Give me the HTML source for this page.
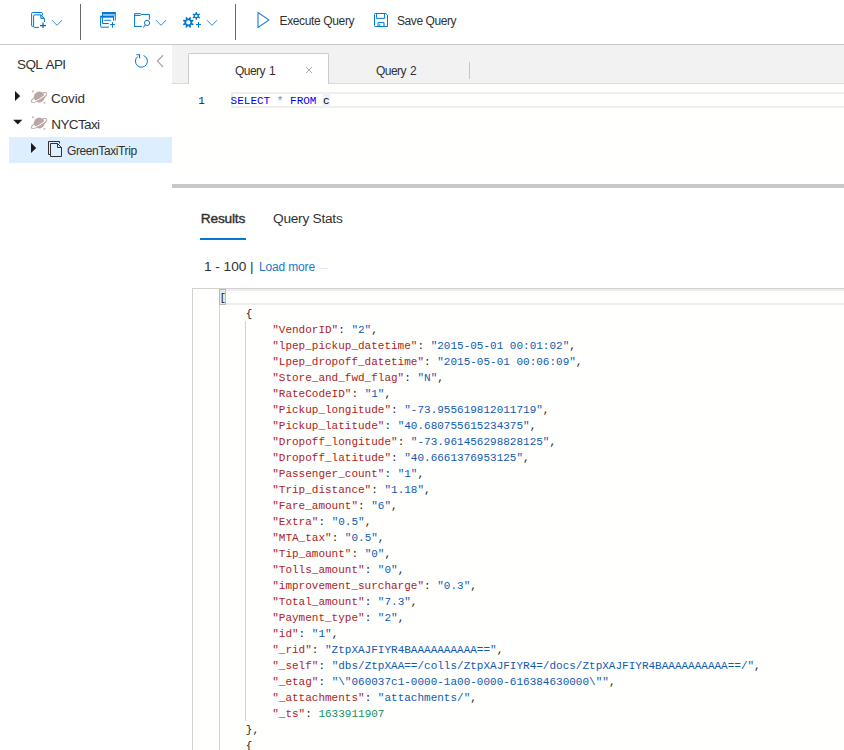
<!DOCTYPE html>
<html lang="en">
<head>
<meta charset="utf-8">
<title>Data Explorer</title>
<style>
html,body{margin:0;padding:0;}
body{width:844px;height:750px;overflow:hidden;background:#fff;position:relative;font-family:"Liberation Sans",sans-serif;color:#1b1a19;}
.abs{position:absolute;}
svg{position:absolute;overflow:visible;}
.t{position:absolute;white-space:nowrap;line-height:1;}
/* toolbar */
#tbline{left:0;top:44px;width:844px;height:1px;background:#c8c8c8;}
.vsep{width:1px;background:#686868;top:4px;height:36px;}
.cmd{font-size:12px;color:#323130;}
/* sidebar */
#sel{left:9px;top:137px;width:163px;height:26px;background:#ddeefe;}
.tree{font-size:14px;color:#323130;}
/* tabs */
#tabbar{left:172px;top:45px;width:672px;height:38px;background:#f2f2f2;border-bottom:1px solid #dadada;}
#tab1{left:188px;top:53px;width:139px;height:30px;background:#fff;border:1px solid #cbcbcb;border-bottom:none;border-radius:2px 2px 0 0;}
.tabt{font-size:12px;letter-spacing:-0.55px;word-spacing:1.2px;color:#323130;}
/* editors */
.mono{font-family:"Liberation Mono",monospace;font-size:11px;}
#qline{left:231px;top:92px;width:613px;height:12px;border:2px solid #eeeeee;}
#split{left:172px;top:184px;width:672px;height:4px;background:#c8c8c8;}
#jsonbox{left:192px;top:288px;width:660px;height:470px;border:1px solid #d2d2d2;background:#fffffe;}
#qbg{left:172px;top:84px;width:672px;height:100px;background:#fffffe;}
.ln{position:absolute;left:219.4px;margin-top:1px;height:16px;line-height:16px;white-space:pre;font-family:"Liberation Mono",monospace;font-size:11px;color:#1a1a1a;}
.k{color:#ad2222;}
.s{color:#1159b0;}
.n{color:#14905f;}
.guide{width:1px;background:#d3d3d3;}
.bm{}
#bmbox{left:219px;top:289px;width:5px;height:14px;border:1px solid #b9b9b9;background:#e3ede3;}
</style>
</head>
<body>
<!-- ===== toolbar ===== -->
<svg width="844" height="44" style="left:0;top:0" fill="none" stroke="#0078d4" stroke-width="1">
  <!-- new item icon -->
  <path d="M33.5 26.4H32.5Q31.6 26.4 31.6 25.5V13.4Q31.6 12.5 32.5 12.5H41.5Q42.4 12.5 42.4 13.4V15.5"/>
  <path d="M39 27.4H34.5Q33.6 27.4 33.6 26.5V15.8Q33.6 14.9 34.5 14.9H40.8L44.4 18.5V22"/>
  <path d="M40.8 14.9V18.4H44.4" />
  <path d="M41.2 15.8V18H43.6Z" fill="#9ab0c4" stroke="none"/>
  <path d="M40 25.5H46M43 22.5V28" stroke="#1668ad" stroke-width="1.25"/>
  <path d="M52 20.2L57 25.3L62 20.2" stroke-width="0.85"/>
  <!-- new query window -->
  <rect x="102" y="12" width="13.8" height="2" fill="#0078d4" stroke="none"/>
  <rect x="103" y="14" width="12" height="1.7" fill="#8ec2ec" stroke="none"/>
  <path d="M115.25 13V20.7"/>
  <path d="M102.55 13V23.5H108.8"/>
  <rect x="100.1" y="15.7" width="13.9" height="2" fill="#0078d4" stroke="none"/>
  <path d="M113.5 17V20.7"/>
  <path d="M100.6 17V26.2Q100.6 27.2 101.6 27.2H108.8"/>
  <path d="M104.3 20.3H110.9"/>
  <path d="M110.1 24.5H114.9M112.5 22.1V27.7"/>
  <!-- folder search -->
  <path d="M134.6 26.45V13.65H140.6L141.4 14.45H149.4V19.7"/>
  <path d="M134.6 15.4H140.6L141.4 14.45"/>
  <path d="M134.1 26.45H141.9"/>
  <circle cx="147.07" cy="22.9" r="2.6"/>
  <path d="M145.2 24.8L143.2 27.7"/>
  <path d="M156 20.2L161 25.3L166 20.2" stroke-width="0.85"/>
  <!-- gears -->
  <g stroke="none" fill="#0078d4">
    <path fill-rule="evenodd" d="M192.17 22.94L193.70 23.93L193.16 25.22L191.38 24.84L190.69 25.53L191.07 27.31L189.78 27.85L188.79 26.32L187.81 26.32L186.82 27.85L185.53 27.31L185.91 25.53L185.22 24.84L183.44 25.22L182.90 23.93L184.43 22.94L184.43 21.96L182.90 20.97L183.44 19.68L185.22 20.06L185.91 19.37L185.53 17.59L186.82 17.05L187.81 18.58L188.79 18.58L189.78 17.05L191.07 17.59L190.69 19.37L191.38 20.06L193.16 19.68L193.70 20.97L192.17 21.96Z M190.40 22.45A2.10 2.10 0 1 0 186.20 22.45A2.10 2.10 0 1 0 190.40 22.45Z"/>
    <path fill-rule="evenodd" d="M195.43 13.56L195.72 11.94L196.88 11.94L197.17 13.56L197.89 13.97L199.43 13.42L200.02 14.43L198.76 15.48L198.76 16.32L200.02 17.37L199.43 18.38L197.89 17.83L197.17 18.24L196.88 19.86L195.72 19.86L195.43 18.24L194.71 17.83L193.17 18.38L192.58 17.37L193.84 16.32L193.84 15.48L192.58 14.43L193.17 13.42L194.71 13.97Z M197.50 15.90A1.20 1.20 0 1 0 195.10 15.90A1.20 1.20 0 1 0 197.50 15.90Z"/>
  </g>
  <path d="M195.9 24.5H201M198.5 22V27.7"/>
  <path d="M207 20.2L212 25.3L217 20.2" stroke-width="0.85"/>
  <!-- execute -->
  <path d="M258 12.6V27.4L268.9 20Z" stroke-width="1.25" stroke="#2f8ad9" stroke-linejoin="round"/>
  <!-- save -->
  <path d="M375.5 13.5H385.8L387.5 15.2V26.5H375.5Q374.5 26.5 374.5 25.5V14.5Q374.5 13.5 375.5 13.5Z"/>
  <path d="M376.6 13.5V18.4H384.6V13.5"/>
  <path d="M378 26.5V22.6H384V26.5M379.8 24.3V26.5"/>
</svg>
<div class="abs vsep" style="left:80px"></div>
<div class="abs vsep" style="left:235px"></div>
<div class="t cmd" id="exq" style="left:279.5px;top:14.6px;font-size:12px;letter-spacing:-0.36px">Execute Query</div>
<div class="t cmd" id="svq" style="left:397px;top:14.6px;font-size:12px;letter-spacing:-0.42px">Save Query</div>
<div class="abs" id="tbline"></div>
<!-- ===== sidebar ===== -->
<div class="t" id="sqlapi" style="left:17px;top:57.8px;font-size:13.5px;letter-spacing:-0.62px;word-spacing:1.5px;color:#323130">SQL API</div>
<svg width="172" height="130" style="left:0;top:45px" fill="none">
  <!-- refresh -->
  <path d="M143.55 10.56A6 6 0 1 1 137.7 11.5" stroke="#0078d4" stroke-width="1"/>
  <path d="M136.4 9.7H139.6V13.3" stroke="#0078d4" stroke-width="1.1"/>
  <!-- collapse chevron -->
  <path d="M163 10.2L157.5 16.1L163 22" stroke="#b0a3a2" stroke-width="1.25"/>
  <!-- tree arrows -->
  <path d="M15 46V56L20.2 51Z" fill="#1b1a19"/>
  <path d="M13.2 74.8H22.4L17.8 79.6Z" fill="#1b1a19"/>
  <path d="M31 97.8V108L36.2 102.9Z" fill="#1b1a19"/>
  <!-- planets -->
  <g id="planet1" fill="#b9a7a6" stroke="#b9a7a6">
    <circle cx="39.3" cy="52.0" r="5.4" stroke="none"/>
    <path d="M-8.8 0A8.8 2.5 0 0 0 8.8 0" fill="none" stroke="#fff" stroke-width="1.0" transform="translate(39 52.6) rotate(-30.5) translate(0 -1.0)"/>
    <ellipse cx="0" cy="0" rx="8.8" ry="2.7" fill="none" stroke-width="0.9" transform="translate(39 52.6) rotate(-30.5)"/>
    <path d="M32.9 45.2v2.2M31.8 46.3h2.2M44.4 56.8v2M43.4 57.8h2" stroke-width="0.7" fill="none"/>
  </g>
  <g id="planet2" fill="#b9a7a6" stroke="#b9a7a6" transform="translate(0 26)">
    <circle cx="39.3" cy="52.0" r="5.4" stroke="none"/>
    <path d="M-8.8 0A8.8 2.5 0 0 0 8.8 0" fill="none" stroke="#fff" stroke-width="1.0" transform="translate(39 52.6) rotate(-30.5) translate(0 -1.0)"/>
    <ellipse cx="0" cy="0" rx="8.8" ry="2.7" fill="none" stroke-width="0.9" transform="translate(39 52.6) rotate(-30.5)"/>
    <path d="M32.9 45.2v2.2M31.8 46.3h2.2M44.4 56.8v2M43.4 57.8h2" stroke-width="0.7" fill="none"/>
  </g>
</svg>
<div class="t tree" id="covid" style="left:51px;top:91.8px;font-size:13.5px;letter-spacing:-0.1px">Covid</div>
<div class="t tree" id="nyc" style="left:51.3px;top:117.6px;font-size:13.5px;letter-spacing:-0.62px">NYCTaxi</div>
<div class="abs" id="sel"></div>
<svg width="172" height="30" style="left:0;top:137px" fill="none">
  <path d="M31 5.8V16L36.2 10.9Z" fill="#1b1a19"/>
  <path d="M50.5 17.5H48.5V4.5H59.5V6.5" stroke="#323130" stroke-width="1"/>
  <path d="M50.5 6.5H57.5L61.5 10.5V19.5H50.5Z" stroke="#323130" stroke-width="1"/>
  <path d="M57.5 6.5V10.5H61.5" stroke="#323130" stroke-width="1"/>
</svg>
<div class="t" id="green" style="left:67px;top:145px;font-size:12px;letter-spacing:-0.4px;color:#323130">GreenTaxiTrip</div>

<!-- ===== tabs ===== -->
<div class="abs" id="tabbar"></div>
<div class="abs" id="tab1"></div>
<div class="t tabt" id="q1" style="left:235px;top:65px">Query 1</div>
<svg width="10" height="10" style="left:304px;top:65px"><path d="M2 2L8 8M8 2L2 8" stroke="#a19f9d" stroke-width="0.9" fill="none"/></svg>
<div class="t tabt" id="q2" style="left:376px;top:65px">Query 2</div>
<div class="abs" style="left:469px;top:62px;width:1px;height:17px;background:#c6c6c6"></div>

<!-- ===== query editor ===== -->
<div class="abs" id="qbg"></div>
<div class="abs" id="qline"></div>
<div class="abs" style="left:323px;top:92px;width:7px;height:16px;background:#ecf2f9"></div>
<div class="t mono" id="lnum" style="left:198.2px;top:93px;line-height:16px;color:#0b216f">1</div>
<div class="t mono" id="sql" style="left:230.6px;top:93px;line-height:16px;color:#000;white-space:pre"><span style="color:#0000ff">SELECT</span> <span style="color:#778899">*</span> <span style="color:#0000ff">FROM</span> c</div>
<div class="abs" id="split"></div>

<!-- ===== results ===== -->
<div class="t" id="res" style="left:200.8px;top:212.2px;font-size:13.7px;letter-spacing:-0.2px;-webkit-text-stroke:0.4px #323130;color:#323130">Results</div>
<div class="abs" style="left:200px;top:238px;width:46px;height:2px;background:#0078d4"></div>
<div class="t" id="qs" style="left:273px;top:212.2px;font-size:13.7px;letter-spacing:-0.25px;color:#323130">Query Stats</div>
<div class="t" id="cnt" style="left:204px;top:259.5px;font-size:13.7px;letter-spacing:-0.05px;color:#323130">1 - 100 |</div>
<div class="t" id="lm" style="left:259px;top:260.8px;font-size:12px;letter-spacing:-0.16px;color:#2278c9">Load more</div>
<div class="abs" style="left:319px;top:268px;width:9px;height:1px;background:#dde9f5"></div>
<div class="abs" id="jsonbox"></div>
<div class="abs" style="left:219px;top:289px;width:625px;height:12px;border:2px solid #eeeeee;border-right:none"></div>
<div class="abs" id="bmbox"></div>
<div class="abs guide" style="left:219px;top:305px;height:445px"></div>
<div class="abs guide" style="left:245px;top:321px;height:400px"></div>
<div style="top:289px" class="ln cur"><span class="bm">[</span></div>
<div style="top:305px" class="ln">    {</div>
<div style="top:321px" class="ln">        <span class="k">"VendorID"</span>: <span class="s">"2"</span>,</div>
<div style="top:337px" class="ln">        <span class="k">"lpep_pickup_datetime"</span>: <span class="s">"2015-05-01 00:01:02"</span>,</div>
<div style="top:353px" class="ln">        <span class="k">"Lpep_dropoff_datetime"</span>: <span class="s">"2015-05-01 00:06:09"</span>,</div>
<div style="top:369px" class="ln">        <span class="k">"Store_and_fwd_flag"</span>: <span class="s">"N"</span>,</div>
<div style="top:385px" class="ln">        <span class="k">"RateCodeID"</span>: <span class="s">"1"</span>,</div>
<div style="top:401px" class="ln">        <span class="k">"Pickup_longitude"</span>: <span class="s">"-73.955619812011719"</span>,</div>
<div style="top:417px" class="ln">        <span class="k">"Pickup_latitude"</span>: <span class="s">"40.680755615234375"</span>,</div>
<div style="top:433px" class="ln">        <span class="k">"Dropoff_longitude"</span>: <span class="s">"-73.961456298828125"</span>,</div>
<div style="top:449px" class="ln">        <span class="k">"Dropoff_latitude"</span>: <span class="s">"40.6661376953125"</span>,</div>
<div style="top:465px" class="ln">        <span class="k">"Passenger_count"</span>: <span class="s">"1"</span>,</div>
<div style="top:481px" class="ln">        <span class="k">"Trip_distance"</span>: <span class="s">"1.18"</span>,</div>
<div style="top:497px" class="ln">        <span class="k">"Fare_amount"</span>: <span class="s">"6"</span>,</div>
<div style="top:513px" class="ln">        <span class="k">"Extra"</span>: <span class="s">"0.5"</span>,</div>
<div style="top:529px" class="ln">        <span class="k">"MTA_tax"</span>: <span class="s">"0.5"</span>,</div>
<div style="top:545px" class="ln">        <span class="k">"Tip_amount"</span>: <span class="s">"0"</span>,</div>
<div style="top:561px" class="ln">        <span class="k">"Tolls_amount"</span>: <span class="s">"0"</span>,</div>
<div style="top:577px" class="ln">        <span class="k">"improvement_surcharge"</span>: <span class="s">"0.3"</span>,</div>
<div style="top:593px" class="ln">        <span class="k">"Total_amount"</span>: <span class="s">"7.3"</span>,</div>
<div style="top:609px" class="ln">        <span class="k">"Payment_type"</span>: <span class="s">"2"</span>,</div>
<div style="top:625px" class="ln">        <span class="k">"id"</span>: <span class="s">"1"</span>,</div>
<div style="top:641px" class="ln">        <span class="k">"_rid"</span>: <span class="s">"ZtpXAJFIYR4BAAAAAAAAAA=="</span>,</div>
<div style="top:657px" class="ln">        <span class="k">"_self"</span>: <span class="s">"dbs/ZtpXAA==/colls/ZtpXAJFIYR4=/docs/ZtpXAJFIYR4BAAAAAAAAAA==/"</span>,</div>
<div style="top:673px" class="ln">        <span class="k">"_etag"</span>: <span class="s">"\"060037c1-0000-1a00-0000-616384630000\""</span>,</div>
<div style="top:689px" class="ln">        <span class="k">"_attachments"</span>: <span class="s">"attachments/"</span>,</div>
<div style="top:705px" class="ln">        <span class="k">"_ts"</span>: <span class="n">1633911907</span></div>
<div style="top:721px" class="ln">    },</div>
<div style="top:737px" class="ln">    {</div>
</body>
</html>
